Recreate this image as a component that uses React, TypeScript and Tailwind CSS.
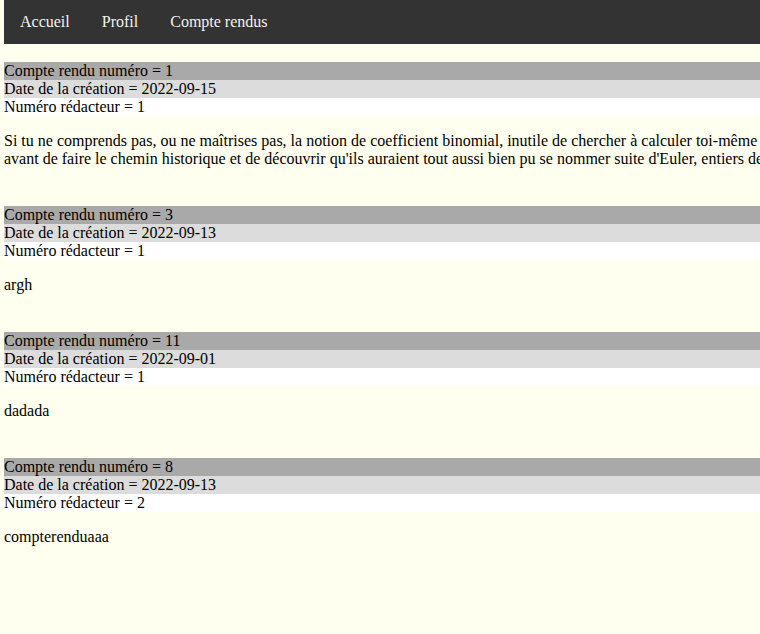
const comptesRendus = [
  {
    numero: 1,
    date: '2022-09-15',
    redacteur: 1,
    lignes: [
      "Si tu ne comprends pas, ou ne maîtrises pas, la notion de coefficient binomial, inutile de chercher à calculer toi-même les nombres de Catalan",
      "avant de faire le chemin historique et de découvrir qu'ils auraient tout aussi bien pu se nommer suite d'Euler, entiers de Segner ou nombres de Ming",
    ],
  },
  { numero: 3, date: '2022-09-13', redacteur: 1, lignes: ['argh'] },
  { numero: 11, date: '2022-09-01', redacteur: 1, lignes: ['dadada'] },
  { numero: 8, date: '2022-09-13', redacteur: 2, lignes: ['compterenduaaa'] },
];

export default function App() {
  return (
    <div
      className="min-h-[634px] w-full overflow-hidden bg-[#fffff0] pl-1 text-base leading-[18px] text-black"
      style={{ fontFamily: '"Liberation Serif", "Times New Roman", serif' }}
    >
      <div className="w-[1200px]">
        {/* barre de navigation */}
        <nav className="flex h-[44px] items-center bg-[#333333]">
          {['Accueil', 'Profil', 'Compte rendus'].map((lien) => (
            <a key={lien} className="px-4 text-[#f2f2f2]">
              {lien}
            </a>
          ))}
        </nav>

        <div className="pt-[18px]">
          {comptesRendus.map((cr) => (
            <div key={cr.numero} className="pb-[22px]">
              <div className="h-[18px] bg-[#a9a9a9]">Compte rendu numéro = {cr.numero}</div>
              <div className="h-[18px] bg-[#dcdcdc]">Date de la création = {cr.date}</div>
              <div className="h-[18px] bg-white">Numéro rédacteur = {cr.redacteur}</div>
              <p className="my-4 whitespace-nowrap">
                {cr.lignes.map((l, i) => (
                  <span key={i} className="block">
                    {l}
                  </span>
                ))}
              </p>
            </div>
          ))}
        </div>
      </div>
    </div>
  );
}
